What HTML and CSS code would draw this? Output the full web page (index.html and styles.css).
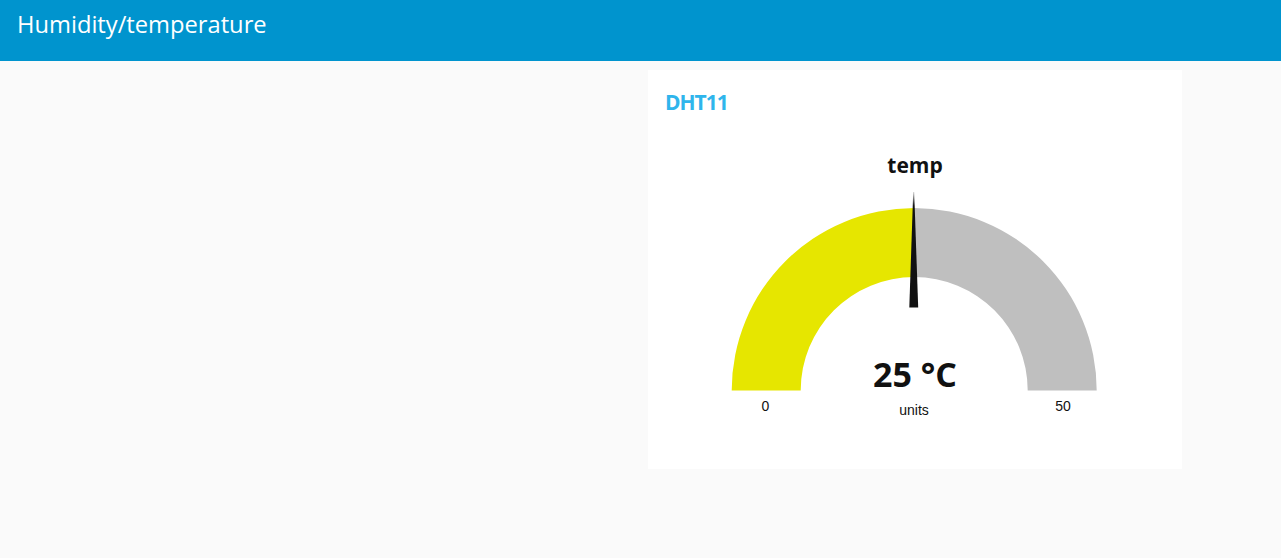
FILE: index.html
```html
<!DOCTYPE html>
<html>
<head>
<meta charset="utf-8">
<title>Humidity/temperature</title>
<link rel="stylesheet" href="styles.css">
</head>
<body>
<header class="toolbar">
  <h1 class="toolbar-title">Humidity/temperature</h1>
</header>
<main class="content">
  <section class="card">
    <div class="card-title">DHT11</div>
    <svg class="gauge" width="534" height="355" viewBox="0 44 534 355">
      <defs>
        <linearGradient id="needleGrad" x1="0" y1="0" x2="0" y2="1">
          <stop offset="0" stop-color="#111" stop-opacity="0.2"/>
          <stop offset="0.12" stop-color="#111" stop-opacity="1"/>
          <stop offset="1" stop-color="#111"/>
        </linearGradient>
      </defs>
      <text class="g-title" x="267" y="103" text-anchor="middle">temp</text>
      <path class="g-fill" d="M83.7 320.5 A182.5 182.5 0 0 1 266.2 138 L266.2 207 A113.5 113.5 0 0 0 152.7 320.5 Z"/>
      <path class="g-back" d="M266.2 138 A182.5 182.5 0 0 1 448.7 320.5 L379.7 320.5 A113.5 113.5 0 0 0 266.2 207 Z"/>
      <polygon class="g-needle" points="261.3,237.5 265.2,122 266.2,122 270.2,237.5" fill="url(#needleGrad)"/>
      <text class="g-value" x="267" y="317" text-anchor="middle">25 °C</text>
      <text class="g-label" x="266" y="345" text-anchor="middle">units</text>
      <text class="g-minmax" x="117.5" y="341" text-anchor="middle">0</text>
      <text class="g-minmax" x="415" y="341" text-anchor="middle">50</text>
    </svg>
  </section>
</main>
</body>
</html>
```
FILE: styles.css
```css
html, body {
  margin: 0;
  padding: 0;
}
body {
  background: #fafafa;
  font-family: "Open Sans", "Liberation Sans", sans-serif;
  min-height: 558px;
}
.toolbar {
  height: 61px;
  background: #0094ce;
  box-sizing: border-box;
  padding: 8px 0 0 17px;
}
.toolbar-title {
  margin: 0;
  font-family: "Open Sans", sans-serif;
  font-weight: 400;
  font-size: 23.7px;
  line-height: 32px;
  color: #ffffff;
}
.content {
  padding: 9px 0 0 648px;
}
.card {
  width: 534px;
  height: 399px;
  background: #ffffff;
  box-sizing: border-box;
  padding-top: 20px;
}
.card-title {
  padding-left: 17px;
  font-family: "Open Sans", sans-serif;
  font-weight: 700;
  font-size: 21px;
  letter-spacing: -1px;
  line-height: 24px;
  color: #2fb5ec;
}
.gauge {
  display: block;
}
.g-title {
  font-family: "Open Sans", sans-serif;
  font-weight: 700;
  font-size: 21px;
  fill: #111111;
}
.g-value {
  font-family: "Open Sans", sans-serif;
  font-weight: 700;
  font-size: 34px;
  fill: #111111;
}
.g-label, .g-minmax {
  font-family: "Liberation Sans", Arial, sans-serif;
  font-size: 14px;
  fill: #111111;
}
.g-fill {
  fill: #e6e600;
}
.g-back {
  fill: #bfbfbf;
}
```
